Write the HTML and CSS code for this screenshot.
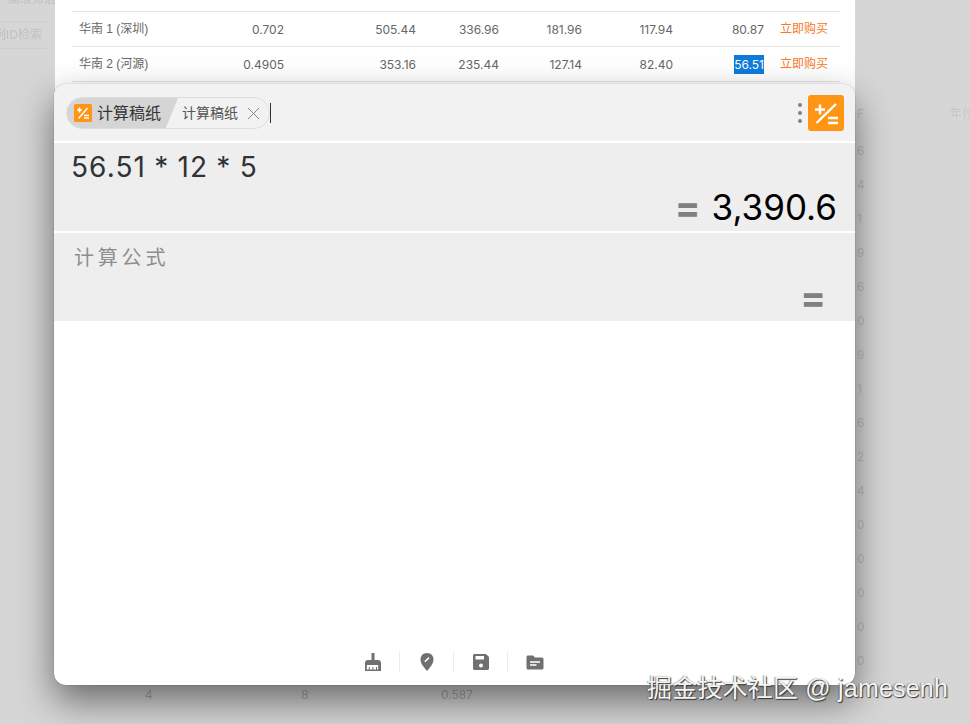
FILE: index.html
```html
<!DOCTYPE html>
<html lang="zh">
<head>
<meta charset="utf-8">
<title>计算稿纸</title>
<link rel="stylesheet" href="styles.css">
</head>
<body>
<div class="backdrop">
  <aside class="side">
    <div class="side-top">高级筛选</div>
    <div class="side-row">实例ID检索</div>
  </aside>
  <main class="sheet">
    <div class="sheet-white">
      <div class="row">
        <span class="name">华南 1 (深圳)</span><span class="v1">0.702</span><span>505.44</span><span>336.96</span><span>181.96</span><span>117.94</span><span>80.87</span><a class="buy">立即购买</a>
      </div>
      <div class="row">
        <span class="name">华南 2 (河源)</span><span class="v1">0.4905</span><span>353.16</span><span>235.44</span><span>127.14</span><span>82.40</span><span><mark class="sel">56.51</mark></span><a class="buy">立即购买</a>
      </div>
    </div>
    <div class="sheet-foot"><span>4</span><span>8</span><span>0.587</span></div>
  </main>
  <aside class="right">
    <div class="right-cols"><span>F</span><span class="year">年付</span></div>
    <div class="digits">
      <span>6</span><span>4</span><span>1</span><span>9</span><span>6</span><span>0</span><span>9</span><span>1</span><span>6</span><span>2</span><span>4</span><span>0</span><span>0</span><span>0</span><span>0</span><span>0</span>
    </div>
  </aside>
</div>

<section class="window">
  <header class="win-head">
    <div class="tabs">
      <div class="tab-active">
        <svg class="tab-icon" viewBox="0 0 18 18"><rect width="18" height="18" rx="1.500" fill="#ff9514"/><path d="M3 6h5M5.500 3.500v5M13.500 4 4.500 14.500M10 11.500h5M10 14h5" stroke="#fff" stroke-width="1.500" fill="none"/></svg>
        <span>计算稿纸</span>
      </div>
      <div class="tab-other">
        <span>计算稿纸</span>
        <svg class="tab-x" viewBox="0 0 13 13"><path d="M1 1l11 11M12 1 1 12" stroke="#8a8a8a" stroke-width="1" fill="none"/></svg>
      </div>
    </div>
    <div class="caret"></div>
    <div class="dots"><i></i><i></i><i></i></div>
    <button class="calc-btn" aria-label="计算">
      <svg viewBox="0 0 36 36"><path d="M7 14.500h10M12 9.500v10M28 9 8.500 28M20 23h10M20 28h10" stroke="#fff" stroke-width="2.400" fill="none"/></svg>
    </button>
  </header>
  <div class="calc">
    <div class="expr">56.51 * 12 * 5</div>
    <div class="result"><b class="eq">=</b><span>3,390.6</span></div>
  </div>
  <div class="calc">
    <div class="expr expr-empty">计算公式</div>
    <div class="result"><b class="eq">=</b><span></span></div>
  </div>
  <div class="win-body"></div>
  <footer class="tools">
    <svg class="tool" viewBox="0 0 18 18"><path fill="#707070" d="M7.500 0h3v7h3.500c1.800 0 3 1.200 3 3v8H1v-8c0-1.800 1.200-3 3-3h3.500zM2.800 12v4.500h2V14h1v2.500h2.600V14h1v2.500h2.600V14h1v2.500h1.200V12z"/></svg>
    <i class="sep"></i>
    <svg class="tool" viewBox="0 0 18 18"><path fill="#707070" d="M9 0c3.800 0 6.500 2.800 6.500 6.400C15.500 10 12.500 14 9 18 5.500 14 2.500 10 2.500 6.400 2.500 2.800 5.200 0 9 0z"/><path d="M6.800 8.800 11 4.600" stroke="#fff" stroke-width="1.500" fill="none"/></svg>
    <i class="sep"></i>
    <svg class="tool" viewBox="0 0 18 18"><path fill="#707070" d="M2.500 1H14l3 3v11.500c0 .8-.7 1.500-1.500 1.500h-13c-.8 0-1.500-.7-1.500-1.500v-13C1 1.700 1.700 1 2.500 1z"/><path fill="#fff" d="M3.500 3H12v3.500H3.500z"/><circle cx="9" cy="12.500" r="2" fill="#fff"/></svg>
    <i class="sep"></i>
    <svg class="tool" viewBox="0 0 18 18"><path fill="#707070" d="M2 2.500h5l2 2h7c.8 0 1.500.7 1.500 1.500v9c0 .8-.7 1.500-1.500 1.500H2c-.8 0-1.500-.7-1.500-1.500V4C.5 3.200 1.200 2.500 2 2.500z"/><path d="M4 9h10M4 12h6.500" stroke="#fff" stroke-width="1.500" fill="none"/></svg>
  </footer>
</section>

<div class="watermark">掘金技术社区 @ jamesenh</div>
</body>
</html>
```
FILE: styles.css
```css
* { box-sizing: border-box; }
html, body { margin: 0; height: 100%; }
body {
  width: 970px;
  height: 724px;
  overflow: hidden;
  background: #d6d6d6;
  font-family: Inter, "Noto Sans CJK SC", sans-serif;
  position: relative;
}
.backdrop { display: flex; height: 724px; }

.side { width: 55px; flex: none; color: #c0c0c0; font-size: 12px; overflow: hidden; white-space: nowrap; filter: blur(.6px); }
.side-top { height: 31px; margin-top: -9px; margin-right: 8px; border-bottom: 1px solid #cdcdcd; text-indent: 8px; line-height: 16px; }
.side-row { height: 27px; margin-right: 8px; border-bottom: 1px solid #cdcdcd; line-height: 26px; text-indent: -18px; }

.sheet { width: 800px; flex: none; display: flex; flex-direction: column; justify-content: space-between; }
.sheet-white { background: #fff; height: 120px; padding: 11px 15px 0 17px; }
.row {
  display: grid;
  grid-template-columns: 132px 80px 132px 83px 83px 91px 91px 76px;
  height: 35px;
  align-items: center;
  border-top: 1px solid #e4e4e4;
  font-size: 12px;
  color: #666;
  text-align: right;
}
.row:last-child { border-bottom: 1px solid #e4e4e4; height: 36px; }
.name { text-align: left; padding: 0 0 3px 7px; white-space: nowrap; font-size: 12px; font-family: "Liberation Sans", "Noto Sans CJK SC", sans-serif; }
.sel { background: #0f7cdc; color: #fff; padding: 2px 0; }
.buy { color: #f47a28; text-align: left; padding: 0 0 3px 16px; white-space: nowrap; font-size: 12px; }
.sheet-foot {
  display: grid;
  grid-template-columns: 156px 156px 148px;
  padding: 0 0 22px 16px;
  font-size: 12px;
  line-height: 14px;
  color: #a8a8a8;
  text-align: center;
  filter: blur(.6px);
}

.right { flex: 1; padding-left: 2px; font-size: 12px; color: #bcbcbc; filter: blur(.6px); }
.right-cols { display: flex; justify-content: space-between; height: 151px; padding-top: 107px; line-height: 14px; white-space: nowrap; overflow: hidden; }
.year { width: 20px; overflow: hidden; color: #c6c6c6; }
.digits { display: flex; flex-direction: column; gap: 20px; margin-top: -7px; }
.digits span { line-height: 14px; }

.window {
  position: absolute;
  left: 54px;
  top: 84px;
  width: 801px;
  height: 601px;
  display: flex;
  flex-direction: column;
  background: #fff;
  border-radius: 12px;
  overflow: hidden;
  box-shadow: 0 0 1px 0 rgba(0,0,0,.5), 0 16px 36px rgba(0,0,0,.5);
}
.win-head {
  height: 57px;
  flex: none;
  background: #f2f2f2;
  display: flex;
  align-items: center;
  padding: 0 11px 0 12px;
}
.tabs {
  display: flex;
  align-items: center;
  width: 204px;
  height: 32px;
  border: 1px solid #dedede;
  border-radius: 16px;
  overflow: hidden;
  margin-top: 1px;
}
.tab-active {
  width: 111px;
  height: 100%;
  flex: none;
  display: flex;
  align-items: center;
  gap: 5px;
  padding-left: 7px;
  background: #d5d5d5;
  clip-path: polygon(0 0, 100% 0, 89% 100%, 0 100%);
  font-size: 16px;
  color: #333;
  white-space: nowrap;
}
.tab-active span { margin-top: -2px; }
.tab-icon { width: 18px; height: 18px; flex: none; }
.tab-other { display: flex; align-items: center; padding-left: 4px; font-size: 14px; color: #555; white-space: nowrap; }
.tab-other span { margin-top: -2px; }
.tab-x { width: 13px; height: 13px; margin-left: 9px; }
.caret { width: 1px; height: 20px; background: #333; margin-top: 1px; }
.dots { margin-left: auto; margin-right: 6px; display: flex; flex-direction: column; gap: 4px; }
.dots i { width: 4px; height: 4px; border-radius: 50%; background: #808080; display: block; }
.calc-btn { width: 36px; height: 36px; padding: 0; border: 0; border-radius: 3px; background: #ff9514; display: block; }
.calc-btn svg { width: 36px; height: 36px; display: block; }

.calc {
  height: 88px;
  flex: none;
  margin-top: 2px;
  background: #eeeeee;
  padding: 0 18px 0 17px;
  display: flex;
  flex-direction: column;
}
.expr { font-size: 28px; line-height: 34px; height: 42px; padding-top: 7px; letter-spacing: 1.100px; word-spacing: -.8px; color: #2f3336; white-space: nowrap; }
.expr-empty { font-size: 20px; letter-spacing: 3.800px; color: #8e8e8e; padding: 8px 0 0 3px; }
.result { display: flex; justify-content: flex-end; align-items: center; gap: 11px; font-size: 35px; line-height: 44px; color: #000; }
.eq { color: #808080; font-size: 38px; }

.win-body { flex: 1; }
.tools { height: 46px; flex: none; display: flex; justify-content: center; align-items: center; padding-right: 2px; }
.tool { width: 18px; height: 18px; margin: 0 18px; flex: none; }
.sep { width: 1px; height: 20px; background: #ececec; flex: none; margin-left: -1px; }

.watermark {
  position: absolute;
  left: 647px;
  top: 672px;
  font-family: "Liberation Sans", "Noto Sans CJK SC", sans-serif;
  font-size: 25px;
  letter-spacing: .2px;
  line-height: 32px;
  color: #f4f4f4;
  white-space: nowrap;
  text-shadow: 1px 1px 1px #333, -1px 0 1px rgba(60,60,60,.5);
}
```
